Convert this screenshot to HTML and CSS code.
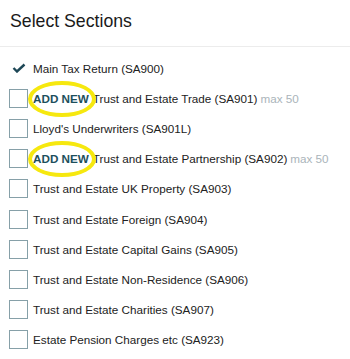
FILE: index.html
```html
<!DOCTYPE html>
<html lang="en">
<head>
    <meta charset="UTF-8">
    <title>Select Sections</title>
    <link rel="stylesheet" href="styles.css">
</head>
<body>
    <div class="panel">
        <h1 class="panel-title">Select Sections</h1>
        <ul class="section-list">
            <li class="section-item selected">
                <span class="tick">
                    <svg width="14" height="10" viewBox="0 0 14 10"><path d="M1.5 5 L5 8.5 L12.5 1.5" fill="none" stroke="#1d4756" stroke-width="2.4"/></svg>
                </span>
                <span class="label">Main Tax Return (SA900)</span>
            </li>
            <li class="section-item">
                <span class="box"></span>
                <span class="add-new">ADD NEW</span>
                <span class="label">Trust and Estate Trade (SA901)</span>
                <span class="max">max 50</span>
            </li>
            <li class="section-item">
                <span class="box"></span>
                <span class="label">Lloyd's Underwriters (SA901L)</span>
            </li>
            <li class="section-item">
                <span class="box"></span>
                <span class="add-new">ADD NEW</span>
                <span class="label">Trust and Estate Partnership (SA902)</span>
                <span class="max">max 50</span>
            </li>
            <li class="section-item">
                <span class="box"></span>
                <span class="label">Trust and Estate UK Property (SA903)</span>
            </li>
            <li class="section-item">
                <span class="box"></span>
                <span class="label">Trust and Estate Foreign (SA904)</span>
            </li>
            <li class="section-item">
                <span class="box"></span>
                <span class="label">Trust and Estate Capital Gains (SA905)</span>
            </li>
            <li class="section-item">
                <span class="box"></span>
                <span class="label">Trust and Estate Non-Residence (SA906)</span>
            </li>
            <li class="section-item">
                <span class="box"></span>
                <span class="label">Trust and Estate Charities (SA907)</span>
            </li>
            <li class="section-item">
                <span class="box"></span>
                <span class="label">Estate Pension Charges etc (SA923)</span>
            </li>
        </ul>
    </div>
</body>
</html>
```

FILE: styles.css
```css
body {
    margin: 0;
    font-family: "Liberation Sans", Arial, sans-serif;
    color: #222;
    background: #fff;
}
.panel {
    width: 350px;
}
.panel-title {
    margin: 0;
    padding: 11px 10px 15px;
    line-height: 20px;
    font-size: 17.7px;
    font-weight: normal;
    color: #1a1a1a;
    border-bottom: 1px solid #ececec;
}
.section-list {
    list-style: none;
    margin: 0;
    padding: 6px 0 0 9px;
}
.section-item {
    display: flex;
    align-items: center;
    height: 30.2px;
    font-size: 11.7px;
    white-space: nowrap;
}
.tick {
    width: 19px;
    margin-right: 5px;
    display: flex;
    justify-content: center;
}
.box {
    width: 19px;
    height: 19px;
    box-sizing: border-box;
    border: 1px solid #86a0a8;
    margin-right: 5px;
    flex-shrink: 0;
}
.add-new {
    position: relative;
    font-weight: bold;
    color: #1d4f5c;
    margin-right: 4px;
}
.add-new::after {
    content: "";
    position: absolute;
    left: -5px;
    top: -11px;
    width: 60px;
    height: 28px;
    border: 4px solid #f6e80f;
    border-radius: 50%;
}
.max {
    color: #aab4ba;
    margin-left: 3px;
}
```
